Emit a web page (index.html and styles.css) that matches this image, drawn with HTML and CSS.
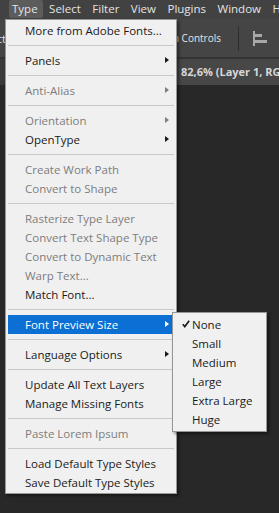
FILE: index.html
```html
<!DOCTYPE html>
<html lang="en">
<head>
    <meta charset="UTF-8">
    <meta name="viewport" content="width=device-width, initial-scale=1.0">
    <title>Type Menu</title>
    <link rel="stylesheet" href="styles.css">
</head>
<body>
    <div class="app">
        <!-- Main menu bar -->
        <div class="menubar">
            <span class="mb-item active">Type</span>
            <span class="mb-item">Select</span>
            <span class="mb-item">Filter</span>
            <span class="mb-item">View</span>
            <span class="mb-item">Plugins</span>
            <span class="mb-item">Window</span>
            <span class="mb-item">Help</span>
        </div>

        <!-- Options bar -->
        <div class="optionsbar">
            <div class="opt-cut">Auto-Select</div>
            <div class="opt-label">Transform Controls</div>
            <div class="opt-divider"></div>
            <svg class="opt-icon" width="15" height="15" viewBox="0 0 15 15">
                <rect x="0" y="0" width="2" height="15" fill="#a8a8a8"/>
                <rect x="2" y="3" width="7" height="3" fill="#a8a8a8"/>
                <rect x="2" y="9" width="12" height="3" fill="#a8a8a8"/>
            </svg>
        </div>

        <!-- Document tabs -->
        <div class="tabbar">
            <div class="tab other">Untitled-1 @ 50% Screen</div>
            <div class="tab current">82,6% (Layer 1, RGB/8) *</div>
        </div>

        <div class="canvas"></div>

        <!-- Type menu -->
        <div class="menu">
            <div class="item">More from Adobe Fonts...</div>
            <div class="sep"></div>
            <div class="item sub">Panels</div>
            <div class="sep"></div>
            <div class="item sub disabled">Anti-Alias</div>
            <div class="sep"></div>
            <div class="item sub disabled">Orientation</div>
            <div class="item sub">OpenType</div>
            <div class="sep"></div>
            <div class="item disabled">Create Work Path</div>
            <div class="item disabled">Convert to Shape</div>
            <div class="sep"></div>
            <div class="item disabled">Rasterize Type Layer</div>
            <div class="item disabled">Convert Text Shape Type</div>
            <div class="item disabled">Convert to Dynamic Text</div>
            <div class="item disabled">Warp Text...</div>
            <div class="item">Match Font...</div>
            <div class="sep"></div>
            <div class="item sub selected">Font Preview Size</div>
            <div class="sep"></div>
            <div class="item sub">Language Options</div>
            <div class="sep"></div>
            <div class="item">Update All Text Layers</div>
            <div class="item">Manage Missing Fonts</div>
            <div class="sep"></div>
            <div class="item disabled">Paste Lorem Ipsum</div>
            <div class="sep"></div>
            <div class="item">Load Default Type Styles</div>
            <div class="item">Save Default Type Styles</div>
        </div>

        <!-- Font Preview Size submenu -->
        <div class="submenu">
            <div class="item checked">
                <svg class="check" width="8" height="8" viewBox="0 0 8 8">
                    <path d="M0.8 4.2 L2.8 6.6 L7.2 0.8" fill="none" stroke="#1a1a1a" stroke-width="1.6"/>
                </svg>
                None
            </div>
            <div class="item">Small</div>
            <div class="item">Medium</div>
            <div class="item">Large</div>
            <div class="item">Extra Large</div>
            <div class="item">Huge</div>
        </div>
    </div>
</body>
</html>
```

FILE: styles.css
```css
body {
    margin: 0;
    padding: 0;
    background: #282828;
    font-family: "Open Sans", "Noto Sans", sans-serif;
    overflow: hidden;
}

.app {
    position: relative;
    width: 279px;
    height: 513px;
    overflow: hidden;
    background: #282828;
}

/* Menu bar */
.menubar {
    display: flex;
    height: 19px;
    background: #424242;
    padding-left: 9px;
    white-space: nowrap;
}

.mb-item {
    color: #e4e4e4;
    font-size: 11.5px;
    line-height: 18px;
    height: 18px;
    padding: 0 5px 0 3px;
    margin-right: 3.5px;
}

.mb-item.active {
    background: #5c5c5c;
    border-radius: 2px;
}

/* Options bar */
.optionsbar {
    display: flex;
    align-items: center;
    height: 38px;
    background: #454545;
    border-bottom: 2px solid #333333;
    white-space: nowrap;
}

.opt-cut {
    width: 6px;
    overflow: hidden;
    direction: rtl;
    color: #e4e4e4;
    font-size: 11px;
    flex: 0 0 6px;
}

.opt-label {
    flex: 0 0 215px;
    overflow: hidden;
    text-align: right;
    color: #e4e4e4;
    font-size: 10px;
}

.opt-divider {
    width: 1px;
    height: 25px;
    background: #2e2e2e;
    margin-left: 17px;
}

.opt-icon {
    margin-left: 14px;
}

/* Document tabs */
.tabbar {
    display: flex;
    height: 26px;
    background: #383838;
    white-space: nowrap;
}

.tab {
    line-height: 26px;
    font-size: 11px;
    font-weight: bold;
    color: #d6d6d6;
    overflow: hidden;
}

.tab.other {
    flex: 0 0 172px;
    background: #3a3a3a;
    direction: rtl;
    text-align: right;
}

.tab.current {
    flex: 1;
    background: #474747;
    padding-left: 9px;
}

.canvas {
    height: 428px;
    background: #282828;
}

/* Drop-down menus */
.menu, .submenu {
    position: absolute;
    background: #f0f0f0;
    border: 1px solid #979797;
    box-shadow: 2px 2px 3px rgba(0, 0, 0, 0.45);
    color: #1a1a1a;
    font-size: 11.5px;
}

.menu {
    left: 5px;
    top: 19px;
    width: 170px;
    padding: 1px 0;
}

.item {
    position: relative;
    height: 19px;
    line-height: 19px;
    padding-left: 19px;
    margin: 0 2px;
    white-space: nowrap;
}

.menu .item {
    padding-left: 17px;
}

.item.disabled {
    color: #7d7d7d;
}

.item.sub::after {
    content: "";
    position: absolute;
    right: 5px;
    top: 6px;
    border-left: 4px solid #1a1a1a;
    border-top: 3.5px solid transparent;
    border-bottom: 3.5px solid transparent;
}

.item.sub.disabled::after {
    border-left-color: #7d7d7d;
}

.item.selected {
    background: #0b6fd4;
    color: #ffffff;
}

.item.selected::after {
    border-left-color: #ffffff;
}

.sep {
    height: 1px;
    background: #c8c8c8;
    margin: 5px 2px 5px 2px;
}

.submenu {
    left: 172px;
    top: 312px;
    width: 93px;
    padding: 2px 0;
}

.submenu .item {
    margin: 0;
    padding-left: 19px;
}

.check {
    position: absolute;
    left: 9px;
    top: 5px;
}
```
